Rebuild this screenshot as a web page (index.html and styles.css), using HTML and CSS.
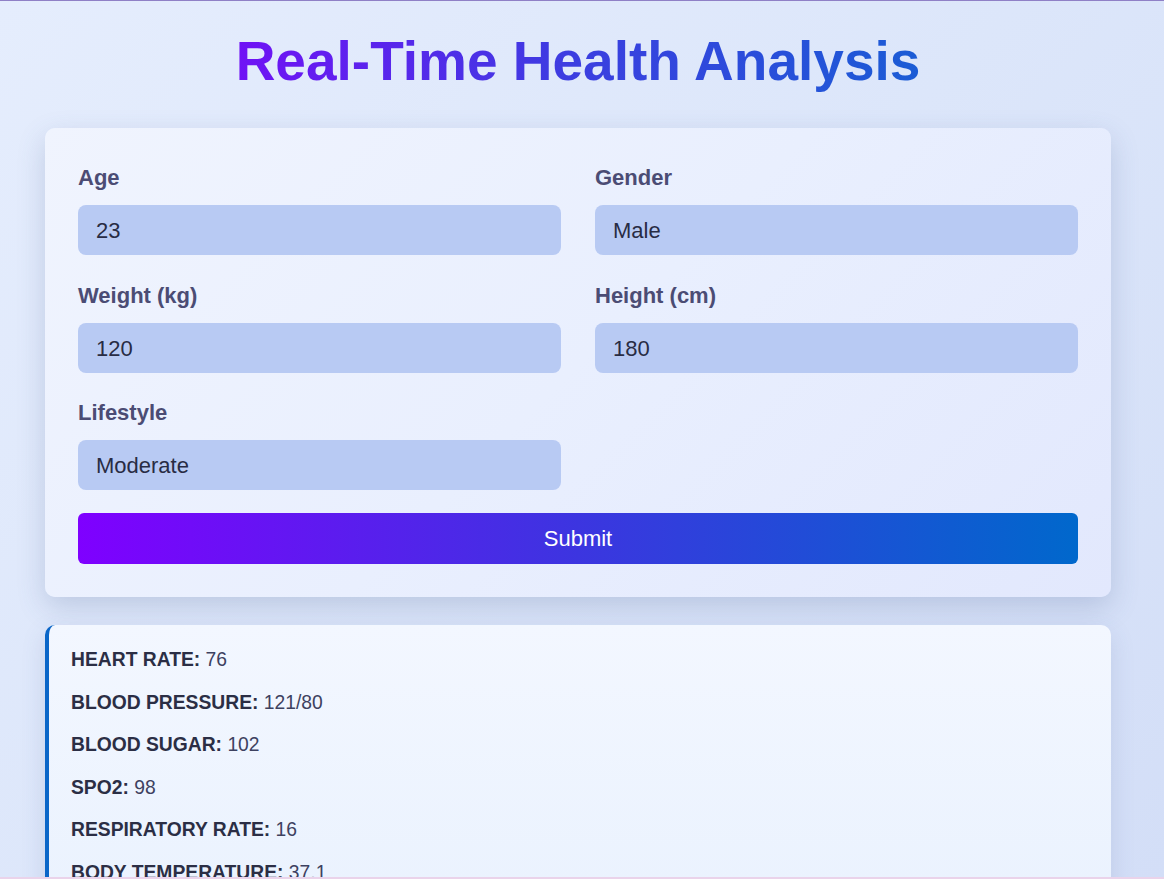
FILE: index.html
```html
<!DOCTYPE html>
<html lang="en">
<head>
<meta charset="utf-8">
<title>Real-Time Health Analysis</title>
<link rel="stylesheet" href="styles.css">
</head>
<body>
<div class="page">
  <h1 class="title">Real-Time Health Analysis</h1>
  <form class="form-card">
    <div class="form-grid">
      <div class="field">
        <label class="label">Age</label>
        <input class="control" type="text" value="23">
      </div>
      <div class="field">
        <label class="label">Gender</label>
        <input class="control" type="text" value="Male">
      </div>
      <div class="field">
        <label class="label">Weight (kg)</label>
        <input class="control" type="text" value="120">
      </div>
      <div class="field">
        <label class="label">Height (cm)</label>
        <input class="control" type="text" value="180">
      </div>
      <div class="field">
        <label class="label">Lifestyle</label>
        <input class="control" type="text" value="Moderate">
      </div>
    </div>
    <button class="submit" type="button">Submit</button>
  </form>
  <div class="results">
    <p class="row"><strong class="key">HEART RATE:</strong> 76</p>
    <p class="row"><strong class="key">BLOOD PRESSURE:</strong> 121/80</p>
    <p class="row"><strong class="key">BLOOD SUGAR:</strong> 102</p>
    <p class="row"><strong class="key">SPO2:</strong> 98</p>
    <p class="row"><strong class="key">RESPIRATORY RATE:</strong> 16</p>
    <p class="row"><strong class="key">BODY TEMPERATURE:</strong> 37.1</p>
  </div>
</div>
<div class="bottom-line"></div>
</body>
</html>
```
FILE: styles.css
```css
html {
  border-top: 1px solid #8f80c6;
  background: linear-gradient(135deg, #e5edfd 0%, #dce6fa 50%, #d3def7 100%);
  min-height: 100%;
}
body {
  margin: 0;
  padding: 0 8px 0 0;
  font-family: "Liberation Sans", Arial, sans-serif;
  height: 878px;
  overflow: hidden;
}
.page {
  width: 1066px;
  margin: 0 auto;
}
.title {
  width: fit-content;
  white-space: nowrap;
  margin: 29px auto 35px;
  font-size: 55px;
  line-height: 63px;
  font-weight: 700;
  text-align: center;
  background: linear-gradient(90deg, #7012f5 0%, #3b3ee0 50%, #1b5cd5 100%);
  -webkit-background-clip: text;
  background-clip: text;
  color: transparent;
}
.form-card {
  display: block;
  padding: 37px 33px 33px;
  border-radius: 10px;
  background: linear-gradient(135deg, #f0f4fe 0%, #e9effe 50%, #e2e8fd 100%);
  box-shadow: 0 10px 28px rgba(70, 90, 140, 0.22);
}
.form-grid {
  display: grid;
  grid-template-columns: 1fr 1fr;
  column-gap: 34px;
  row-gap: 27.5px;
}
.field {
  display: flex;
  flex-direction: column;
}
.label {
  display: block;
  font-size: 22px;
  line-height: 25px;
  font-weight: 700;
  color: #4b4c74;
  margin-bottom: 15px;
}
.control {
  box-sizing: border-box;
  height: 50px;
  width: 100%;
  border: none;
  border-radius: 8px;
  background: #b8caf3;
  padding: 2px 18px 0;
  font-family: "Liberation Sans", Arial, sans-serif;
  font-size: 22px;
  color: #282c44;
  outline: none;
}
.submit {
  display: block;
  box-sizing: border-box;
  width: 100%;
  height: 51px;
  margin-top: 23px;
  border: none;
  border-radius: 6px;
  background: linear-gradient(90deg, #7f00ff 0%, #3c35e0 50%, #0068cc 100%);
  color: #ffffff;
  font-family: "Liberation Sans", Arial, sans-serif;
  font-size: 22px;
}
.results {
  margin-top: 28px;
  border-left: 4px solid #0a66c8;
  border-radius: 10px;
  padding: 22px 22px;
  background: linear-gradient(180deg, #f3f7ff 0%, #eaf2fe 100%);
  box-shadow: 0 8px 24px rgba(70, 90, 140, 0.15);
  display: flex;
  flex-direction: column;
  gap: 17.6px;
}
.row {
  margin: 0;
  font-size: 19.3px;
  line-height: 25px;
  color: #3d4160;
}
.key {
  color: #2b2e45;
  font-weight: 700;
}
.bottom-line {
  position: fixed;
  left: 0;
  right: 0;
  bottom: 0;
  height: 2px;
  background: #ead3ea;
}
```
